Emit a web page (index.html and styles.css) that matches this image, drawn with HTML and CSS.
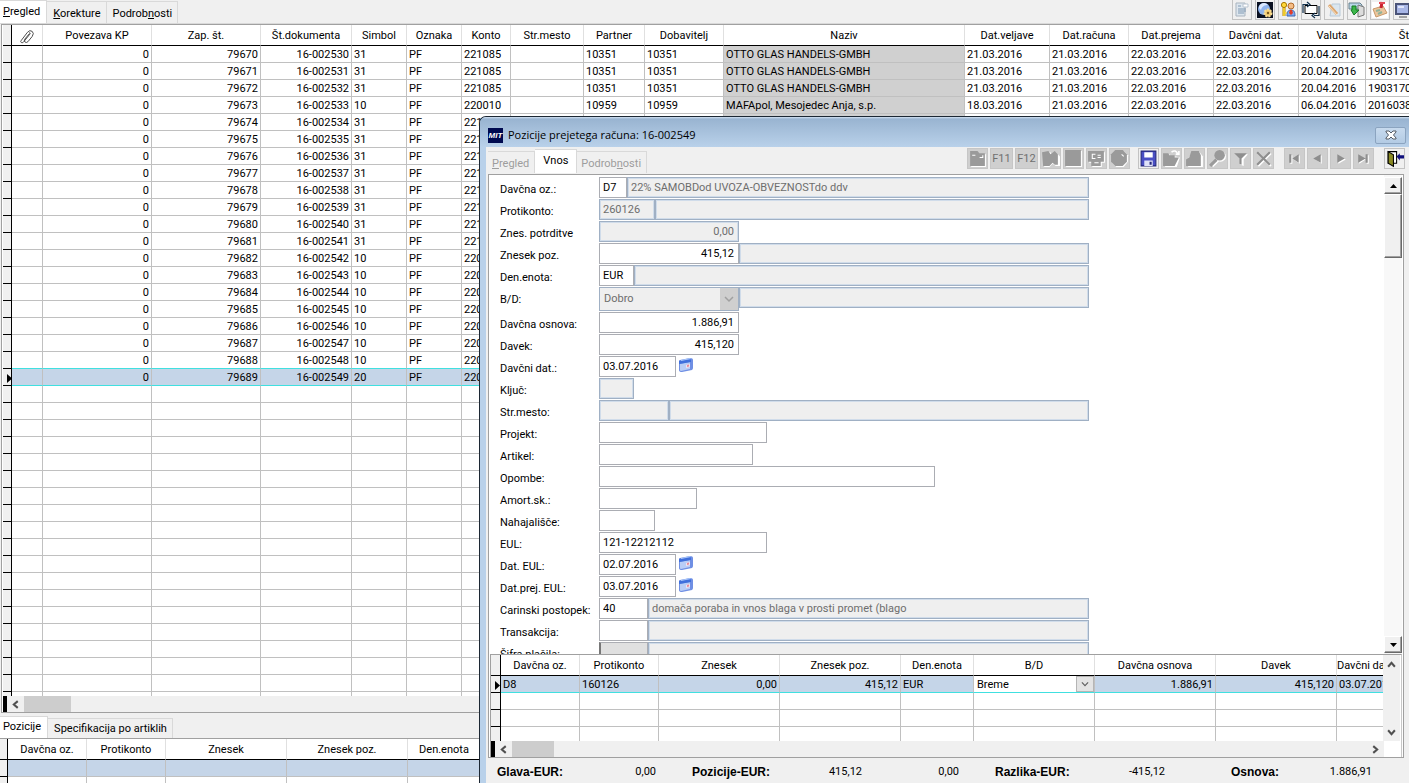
FILE: index.html
```html
<!DOCTYPE html>
<html lang="sl">
<head>
<meta charset="utf-8">
<title>Pozicije prejetega računa</title>
<link rel="stylesheet" href="styles.css">
</head>
<body>
<main class="app">
  <header class="strip">
    <nav class="tabs">
      <button class="tab active"><u>P</u>regled</button>
      <button class="tab"><u>K</u>orekture</button>
      <button class="tab">Podrob<u>n</u>osti</button>
    </nav>
    <div class="tools">
      <button class="tool" aria-label="Obrazec"><svg viewBox="0 0 18 18"><path fill="#dde6ee" stroke="#a9b4bf" d="M3 2h9v13H3z"/><path stroke="#7f98b2" d="M5 5h3M5 8h8M5 10h8M5 12h6"/><path fill="#fff" stroke="#b9c4cf" d="M10 3h5v3h-5z"/></svg></button>
      <button class="tool" aria-label="Nastavitve"><svg viewBox="0 0 18 18"><path fill="#0a1020" d="M1 1h16v16H1z"/><circle cx="8" cy="8" r="6" fill="#8fb4ee"/><path fill="#dbe9ff" d="M3 7a5 5 0 0 1 9-3C9 4 6 5 5 9z"/><circle cx="12" cy="12" r="3.5" fill="#f3cd72" stroke="#f8dc94" stroke-width="2" stroke-dasharray="2 1"/><circle cx="12" cy="12" r="1.2" fill="#7a5a20"/></svg></button>
      <button class="tool" aria-label="Uporabniki"><svg viewBox="0 0 18 18"><circle cx="5" cy="4" r="2.6" fill="#ffd83a" stroke="#a87700"/><path stroke="#b88400" stroke-width="3" d="M5 7v8"/><path stroke="#ffe03a" stroke-width="1.5" d="M5 7v8M6 12h2"/><circle cx="12" cy="5" r="3" fill="#f5bd86" stroke="#b36a2a"/><path fill="#7eaaf0" stroke="#3d62b0" d="M8 15c0-4 1-6 4-6s4 2 4 6z"/><path fill="#e33a28" d="M11 9h2l1 3-2 2-2-2z"/></svg></button>
      <button class="tool" aria-label="Osveži"><svg viewBox="0 0 18 18"><path fill="#fff" stroke="#000" d="M3 4.500h12v8H3z"/><path fill="none" stroke="#12304c" stroke-width="1.200" d="M1 12V3.500h5M5 1l3 2.500L5 6M17 5v9.500h-5M13 12l-3 2.500 3 2.500"/></svg></button>
      <button class="tool" aria-label="Priponka"><svg viewBox="0 0 18 18"><path fill="#dbe6ef" stroke="#b8c9d8" d="M7 3h8v12H5z"/><path stroke="#dda66e" stroke-width="3" d="M4 4l8 9"/><path stroke="#fae2c4" d="M4 5l8 9"/></svg></button>
      <button class="tool" aria-label="Prenos"><svg viewBox="0 0 18 18"><path fill="#b9d6e8" stroke="#67808e" d="M1 2h11l2 2v4H1z"/><path fill="#dcdcdc" stroke="#7a7a7a" d="M10 4l6 2v8l-6 2z"/><path fill="#3cb64a" stroke="#157a25" d="M4 5h4v4h3l-5 5-3-5h1z"/></svg></button>
      <button class="tool" aria-label="Zaznamek"><svg viewBox="0 0 18 18"><path fill="#fff" d="M1 1h16v16H1z"/><path fill="#ecc59c" stroke="#c89868" d="M2 8l10-3 4 7-11 4z"/><path stroke="#8fb29a" stroke-width="2" d="M5 10l4-1M7 13l4-2"/><path stroke="#c9212e" stroke-width="3" d="M11 1l-1 6"/><path stroke="#e24b57" stroke-width="2" d="M8 2h6"/></svg></button>
      <button class="tool" aria-label="Zaslon"><svg viewBox="0 0 18 18"><path fill="#a8b6e6" stroke="#4a5378" stroke-width="2" d="M2 3h13v10H2z"/><path fill="#dfe5fb" d="M4 5h6v2H4z"/><path stroke="#555" d="M5 16h8"/></svg></button>
    </div>
  </header>

  <section class="grid-box main-grid">
    <div class="grid-view">
      <table class="grid" id="invoices">
        <colgroup>
          <col class="c10"><col class="c31"><col class="c109"><col class="c109"><col class="c91"><col class="c55"><col class="c55"><col class="c49"><col class="c73"><col class="c61"><col class="c79"><col class="c241"><col class="c85"><col class="c79"><col class="c85"><col class="c85"><col class="c67"><col>
        </colgroup>
        <thead><tr>
          <th></th>
          <th><svg class="clip" viewBox="0 0 16 16"><path fill="none" stroke="#444" d="M2 12L8.500 3.500Q11 .5 13.500 2.500Q16 4.500 13.500 8L9 13.500Q7.500 15 6 14T5.500 11L10.500 5M2 12Q.5 13.500 2 14.500T5 13L11 5.500Q12 4 10.500 3.500"/></svg></th>
          <th>Povezava KP</th><th>Zap. št.</th><th>Št.dokumenta</th><th>Simbol</th><th>Oznaka</th><th>Konto</th><th>Str.mesto</th><th>Partner</th><th>Dobavitelj</th><th>Naziv</th><th>Dat.veljave</th><th>Dat.računa</th><th>Dat.prejema</th><th>Davčni dat.</th><th>Valuta</th><th class="end">Št</th>
        </tr></thead>
        <tbody></tbody>
      </table>
    </div>
    <div class="hscroll"><i class="split"></i><button class="arrow" aria-label="Levo"><svg viewBox="0 0 8 8"><path fill="none" stroke="#505050" stroke-width="1.8" d="M6 1L2.500 4 6 7"/></svg></button><i class="thumb wide"></i></div>
  </section>

  <section class="lower">
    <nav class="tabs">
      <button class="tab active">Pozicije</button>
      <button class="tab">Specifikacija po artiklih</button>
    </nav>
    <div class="lower-view">
      <table class="grid" id="positions">
        <colgroup><col class="c8"><col class="c79"><col class="c79"><col class="c121"><col class="c121"><col class="c73"><col></colgroup>
        <thead><tr><th></th><th>Davčna oz.</th><th>Protikonto</th><th>Znesek</th><th>Znesek poz.</th><th>Den.enota</th><th></th></tr></thead>
        <tbody>
          <tr class="soft"><td></td><td></td><td></td><td></td><td></td><td></td><td></td></tr>
          <tr><td></td><td></td><td></td><td></td><td></td><td></td><td></td></tr>
        </tbody>
      </table>
    </div>
  </section>
</main>

<section class="dialog" role="dialog" aria-labelledby="dlg-title">
  <header class="titlebar">
    <span class="logo">MIT</span>
    <h1 id="dlg-title">Pozicije prejetega računa: 16-002549</h1>
    <button class="close" aria-label="Zapri"><svg viewBox="0 0 12 10"><path fill="#fff" stroke="#555c66" d="M1 1h3l2 2 2-2h3v1L8.500 5 11 8v1H8L6 7 4 9H1V8l2.500-3L1 2z"/></svg></button>
  </header>
  <div class="client">
    <div class="dlg-strip">
      <nav class="tabs">
        <button class="tab" disabled><u>P</u>regled</button>
        <button class="tab active">Vnos</button>
        <button class="tab" disabled>Podrob<u>n</u>osti</button>
      </nav>
      <div class="dlg-tools">
        <div class="group">
          <button class="tool off" aria-label="Nov"><svg viewBox="0 0 18 18"><path fill="#fff" d="M3 3h7l2 2h5v12H3z"/><path fill="#9a9a9a" d="M2 2h7l2 2h5v12H2z"/><path fill="none" stroke="#fff" d="M4 6h3M11 8h3V6"/></svg></button>
          <button class="tool off fkey">F11</button>
          <button class="tool off fkey">F12</button>
          <button class="tool off" aria-label="Kopiraj"><svg viewBox="0 0 18 18"><path fill="#fff" d="M3 4l6-1 2 3 3-3 4 4v9h-4l-3-2-3 3H3z"/><path fill="#9a9a9a" d="M1 3l6-1 2 3 4-3 3 3v10h-3l-2-2-3 3H2z"/></svg></button>
          <button class="tool off" aria-label="Blok"><svg viewBox="0 0 18 18"><path fill="#fff" d="M2 2h15v15H2z"/><path fill="#9a9a9a" d="M1 1h15v15H1z"/></svg></button>
          <button class="tool off" aria-label="Izračun"><svg viewBox="0 0 18 18"><path fill="#fff" d="M2 3h15v10h-3v4H5v-4H2z"/><path fill="#9a9a9a" d="M1 2h15v10h-3v4H4v-4H1z"/><path fill="none" stroke="#fff" d="M8 5H5v4h3M10 6h3M10 8h3M7 13h4"/></svg></button>
          <button class="tool off" aria-label="Stanje"><svg viewBox="0 0 18 18"><path fill="#fff" d="M6 2h7l4 4v6l-4 5H6l-4-4V6z"/><path fill="#9a9a9a" d="M5 1h7l4 4v7l-4 4H5l-4-4V5z"/><path stroke="#fff" d="M11 5l2 2"/></svg></button>
        </div>
        <div class="group">
          <button class="tool" aria-label="Shrani"><svg viewBox="0 0 18 18"><path fill="#4a4fc4" stroke="#25287a" d="M2 2h14v14H2z"/><path fill="#fff" d="M5 3h8v5H5z"/><path fill="#dfe2f8" d="M5 11h8v5H5z"/><path fill="#25287a" d="M10 12h2v3h-2z"/></svg></button>
          <button class="tool off" aria-label="Odpri"><svg viewBox="0 0 18 18"><path fill="#fff" d="M2 5h5l1 2h5l4 1-3 9H3z"/><path fill="#9a9a9a" d="M1 4h5l1 2h5v2h4l-4 8H1z"/><path fill="none" stroke="#fff" stroke-width="1.500" d="M9 3q4-3 6 2M13 5h3V2"/></svg></button>
          <button class="tool off" aria-label="Natisni"><svg viewBox="0 0 18 18"><path fill="#fff" d="M7 3h7l3 4v10H3V9z"/><path fill="#9a9a9a" d="M6 2h7l2 4v10H1v-6l3-2z"/></svg></button>
          <button class="tool off" aria-label="Išči"><svg viewBox="0 0 18 18"><path stroke="#fff" stroke-width="3" d="M4 16l6-6"/><circle cx="12" cy="7" r="5" fill="#fff"/><path stroke="#9a9a9a" stroke-width="3" d="M2 16l6-6"/><circle cx="11" cy="6" r="5" fill="#9a9a9a"/></svg></button>
          <button class="tool off" aria-label="Filter"><svg viewBox="0 0 18 18"><path fill="#fff" d="M4 5h12l-4 5v6l-3-1v-5z"/><path fill="#8e8e8e" d="M3 4h12l-5 5v6l-2-1V9z"/></svg></button>
          <button class="tool off" aria-label="Briši"><svg viewBox="0 0 18 18"><path stroke="#fff" stroke-width="2" d="M4 4l12 12M16 4L4 16"/><path stroke="#8e8e8e" stroke-width="2" d="M3 3l12 12M15 3L3 15"/></svg></button>
        </div>
        <div class="group nav">
          <button class="tool off" aria-label="Prvi"><svg viewBox="0 0 18 18"><path fill="#fff" d="M5 6h2v8H5zM14 6v8l-6-4z"/><path fill="#8e8e8e" d="M4 5h2v8H4zM13 5v8L7 9z"/></svg></button>
          <button class="tool off" aria-label="Prejšnji"><svg viewBox="0 0 18 18"><path fill="#fff" d="M13 6v8l-6-4z"/><path fill="#8e8e8e" d="M12 5v8L5 9z"/></svg></button>
          <button class="tool off" aria-label="Naslednji"><svg viewBox="0 0 18 18"><path fill="#fff" d="M7 6v8l7-4z"/><path fill="#8e8e8e" d="M6 5v8l7-4z"/></svg></button>
          <button class="tool off" aria-label="Zadnji"><svg viewBox="0 0 18 18"><path fill="#fff" d="M5 6v8l6-4zM12 6h2v8h-2z"/><path fill="#8e8e8e" d="M4 5v8l7-4zM11 5h2v8h-2z"/></svg></button>
        </div>
        <div class="group nav">
          <button class="tool" aria-label="Izhod"><svg viewBox="0 0 18 18"><path fill="#fff" stroke="#000" d="M3 2.500h8v11H3z"/><path fill="#8a8a22" stroke="#000" d="M3 2.500l5 3v11l-5-3z"/><path fill="#10107c" d="M11 7l3-3v2h4v3h-4v2z"/></svg></button>
        </div>
      </div>
    </div>

    <div class="panel">
      <div class="form-area">
        <form class="form">
          <div class="row"><label for="f1">Davčna oz.:</label><div class="fields"><input id="f1" class="f28" value="D7"><input class="desc" readonly aria-label="Davčna oznaka opis" value="22% SAMOBDod UVOZA-OBVEZNOSTdo ddv"></div></div>
          <div class="row"><label for="f2">Protikonto:</label><div class="fields"><input id="f2" class="f56" readonly value="260126"><input class="desc" readonly aria-label="Protikonto opis"></div></div>
          <div class="row"><label for="f3">Znes. potrditve</label><div class="fields"><input id="f3" class="f140 num" readonly value="0,00"></div></div>
          <div class="row"><label for="f4">Znesek poz.</label><div class="fields"><input id="f4" class="f140 num" value="415,12"><input class="desc" readonly aria-label="Znesek opis"></div></div>
          <div class="row"><label for="f5">Den.enota:</label><div class="fields"><input id="f5" class="f35" value="EUR"><input class="desc" readonly aria-label="Denarna enota opis"></div></div>
          <div class="row tall"><label for="f6">B/D:</label><div class="fields"><span class="combo f140"><select id="f6" disabled><option>Dobro</option></select><svg viewBox="0 0 18 18"><path fill="none" stroke="#a0a0a0" stroke-width="1.500" d="M5 7l4 4 4-4"/></svg></span><input class="desc" readonly aria-label="B/D opis"></div></div>
          <div class="row"><label for="f7">Davčna osnova:</label><div class="fields"><input id="f7" class="f140 num" value="1.886,91"></div></div>
          <div class="row"><label for="f8">Davek:</label><div class="fields"><input id="f8" class="f140 num" value="415,120"></div></div>
          <div class="row"><label for="f9">Davčni dat.:</label><div class="fields"><input id="f9" class="f77" value="03.07.2016"><button type="button" class="cal" aria-label="Koledar"></button></div></div>
          <div class="row"><label for="f10">Ključ:</label><div class="fields"><input id="f10" class="f35" readonly></div></div>
          <div class="row"><label for="f11">Str.mesto:</label><div class="fields"><input id="f11" class="f70" readonly><input class="desc" readonly aria-label="Stroškovno mesto opis"></div></div>
          <div class="row"><label for="f12">Projekt:</label><div class="fields"><input id="f12" class="f168"></div></div>
          <div class="row"><label for="f13">Artikel:</label><div class="fields"><input id="f13" class="f154"></div></div>
          <div class="row"><label for="f14">Opombe:</label><div class="fields"><input id="f14" class="f336"></div></div>
          <div class="row"><label for="f15">Amort.sk.:</label><div class="fields"><input id="f15" class="f98"></div></div>
          <div class="row"><label for="f16">Nahajališče:</label><div class="fields"><input id="f16" class="f56"></div></div>
          <div class="row"><label for="f17">EUL:</label><div class="fields"><input id="f17" class="f168" value="121-12212112"></div></div>
          <div class="row"><label for="f18">Dat. EUL:</label><div class="fields"><input id="f18" class="f77" value="02.07.2016"><button type="button" class="cal" aria-label="Koledar"></button></div></div>
          <div class="row"><label for="f19">Dat.prej. EUL:</label><div class="fields"><input id="f19" class="f77" value="03.07.2016"><button type="button" class="cal" aria-label="Koledar"></button></div></div>
          <div class="row"><label for="f20">Carinski postopek:</label><div class="fields"><input id="f20" class="f49" value="40"><input class="desc" readonly aria-label="Carinski postopek opis" value="domača poraba in vnos blaga v prosti promet (blago"></div></div>
          <div class="row"><label for="f21">Transakcija:</label><div class="fields"><input id="f21" class="f49"><input class="desc" readonly aria-label="Transakcija opis"></div></div>
          <div class="row"><label for="f22">Šifra plačila:</label><div class="fields"><input id="f22" class="f49 current"><input class="desc" readonly aria-label="Plačilo opis"></div></div>
        </form>
        <div class="vscroll">
          <button class="bevel" aria-label="Gor"><svg viewBox="0 0 9 5"><path d="M4.500 0L9 5H0z"/></svg></button>
          <i class="bevel grip"></i>
          <i class="fill"></i>
          <button class="bevel" aria-label="Dol"><svg viewBox="0 0 9 5"><path d="M4.500 5L9 0H0z"/></svg></button>
        </div>
      </div>

      <div class="grid-box dlg-grid">
        <div class="dlg-body">
          <div class="dlg-view">
            <table class="grid" id="entries">
              <colgroup><col class="c10"><col class="c79"><col class="c79"><col class="c121"><col class="c121"><col class="c73"><col class="c121"><col class="c121"><col class="c121"><col></colgroup>
              <thead><tr><th></th><th>Davčna oz.</th><th>Protikonto</th><th>Znesek</th><th>Znesek poz.</th><th>Den.enota</th><th>B/D</th><th>Davčna osnova</th><th>Davek</th><th class="start">Davčni dat.</th></tr></thead>
              <tbody>
                <tr class="sel"><td><i class="mark"></i></td><td>D8</td><td>160126</td><td class="n">0,00</td><td class="n">415,12</td><td>EUR</td><td class="cell-combo"><span class="combo"><select aria-label="B/D"><option>Breme</option></select><svg viewBox="0 0 18 18"><path fill="none" stroke="#606060" stroke-width="1.500" d="M5 7l4 4 4-4"/></svg></span></td><td class="n">1.886,91</td><td class="n">415,120</td><td>03.07.2016</td></tr>
              </tbody>
            </table>
          </div>
          <div class="vscroll flat">
            <button class="arrow" aria-label="Gor"><svg viewBox="0 0 8 8"><path fill="none" stroke="#505050" stroke-width="1.800" d="M1 6l3-3.500L7 6"/></svg></button>
            <i class="fill"></i>
            <button class="arrow" aria-label="Dol"><svg viewBox="0 0 8 8"><path fill="none" stroke="#505050" stroke-width="1.800" d="M1 2l3 3.500L7 2"/></svg></button>
          </div>
        </div>
        <div class="hscroll inset"><i class="split"></i><button class="arrow" aria-label="Levo"><svg viewBox="0 0 8 8"><path fill="none" stroke="#505050" stroke-width="1.800" d="M6 1L2.500 4 6 7"/></svg></button><i class="thumb"></i><i class="fill"></i><button class="arrow" aria-label="Desno"><svg viewBox="0 0 8 8"><path fill="none" stroke="#505050" stroke-width="1.800" d="M2 1l3.500 3L2 7"/></svg></button></div>
      </div>
    </div>

    <footer class="totals">
      <div class="sum s159"><b>Glava-EUR:</b><span>0,00</span></div>
      <div class="sum s171"><b>Pozicije-EUR:</b><span>415,12</span></div>
      <div class="sum s61"><span>0,00</span></div>
      <div class="sum s171"><b>Razlika-EUR:</b><span>-415,12</span></div>
      <div class="sum last"><b>Osnova:</b><span>1.886,91</span></div>
    </footer>
  </div>
</section>
<script src="app.js"></script>
</body>
</html>
```
FILE: styles.css
```css
* { box-sizing: border-box; }
html, body { height: 100%; margin: 0; overflow: hidden; }
body, button, input, select { font: 11px/16px Roboto, "Liberation Sans", sans-serif; color: #000; }
button, input, select { margin: 0; padding: 0; border: 0; border-radius: 0; background: none; outline: 0; }
i { display: block; }
.app { display: flex; flex-direction: column; height: 100vh; background: #f0f0f0; }

.strip { display: flex; justify-content: space-between; height: 24px; flex: none; border-bottom: 1px solid #d9d9d9; }
.tabs { display: flex; align-items: flex-end; }
.tab { height: 22px; padding: 2px 5px 0 6px; border: 1px solid #d9d9d9; border-bottom: 0; border-left: 0; background: #f0f0f0; white-space: nowrap; }
.tab.active { align-self: stretch; height: auto; padding: 0 6px 1px 3px; background: #fff; }
.tab:disabled { color: #9d9d9d; }
.tools { display: flex; gap: 3px; margin-right: -4px; }
.tool { width: 20px; height: 20px; padding: 0; border: 1px solid #c3c3c3; background: #f0f0f0; flex: none; }
.tool svg { display: block; width: 18px; height: 18px; }
.tools .tool { border-top: 0; }

.grid-box { border: 1px solid #a0a0a0; background: #fff; display: flex; flex-direction: column; }
.main-grid { flex: 1; min-height: 0; margin-left: 1px; border-right: 0; padding-left: 1px; }
.grid-view { flex: 1; min-height: 0; overflow: hidden; }
.grid { width: 100%; table-layout: fixed; border-collapse: separate; border-spacing: 0; }
.grid th, .grid td { height: 17px; padding: 2px 2px 0; border-right: 1px solid #c0c0c0; border-bottom: 1px solid #c0c0c0; overflow: hidden; white-space: nowrap; line-height: 14px; text-align: left; font-weight: 400; }
.grid th { height: 21px; text-align: center; border-right-color: #e0e0e0; border-bottom-color: #000; }
.grid th.end { text-align: right; padding-right: 0; }
.grid th.start { text-align: left; padding-left: 0; padding-right: 0; }
.grid td.n { text-align: right; }
.grid th:first-child, .grid td:first-child { padding: 0; background: #f0f0f0; border-right-color: #000; border-bottom-color: #000; }
.grid th:last-child, .grid td:last-child { border-right: 0; }
.grid .name { background: #d0d0d0; }
.grid .sel td:not(:first-child), .grid .soft td:not(:first-child) { background: #c5d5e8; }
.grid .sel td:not(:first-child) { border-bottom: 1px solid #40e0e0; }
.grid .before-sel td:not(:first-child) { border-bottom: 1px solid #40e0e0; }
.mark { width: 5px; height: 9px; margin: 3px 0 0 4px; background: #000; clip-path: polygon(0 0, 100% 50%, 0 100%); }
.clip { display: block; width: 16px; height: 15px; margin: 0 auto; }
.c8 { width: 8px; } .c10 { width: 9px; } .c31 { width: 31px; } .c49 { width: 49px; } .c55 { width: 55px; }
.c61 { width: 61px; } .c67 { width: 67px; } .c73 { width: 73px; } .c79 { width: 79px; } .c85 { width: 85px; }
.c91 { width: 91px; } .c109 { width: 109px; } .c121 { width: 121px; } .c241 { width: 241px; }
#entries .c10 { width: 10px; }

.hscroll { display: flex; flex: none; height: 16px; background: #f0f0f0; }
.split { width: 4px; background: #000; }
.arrow { display: grid; place-items: center; width: 17px; height: 16px; flex: none; }
.arrow svg { width: 9px; height: 9px; display: block; }
.thumb { width: 42px; background: #cdcdcd; }
.thumb.wide { width: 47px; }
.fill { flex: 1; }
.lower { flex: none; padding-top: 3px; }
.lower .tabs { height: 22px; }
.lower .tab { height: 20px; padding-top: 0; }
.lower .tab.active { height: auto; }
.lower-view { height: 45px; overflow: hidden; border-top: 1px solid #a0a0a0; background: #fff; }

.dialog { position: absolute; top: 116px; left: 479px; right: 0; bottom: 0; display: flex; flex-direction: column; border: 1px solid #1c2733; border-right: 0; border-bottom: 0; border-radius: 7px 0 0 0; background: #b9d1ea; overflow: hidden; }
.titlebar { display: flex; align-items: center; gap: 5px; height: 30px; flex: none; padding: 6px 3px 0 8px; background: linear-gradient(#d3e2f2 0, #99b4d1 2px, #b9d1ea); }
.logo { width: 15px; height: 15px; background: #000a50; color: #fff; font: italic 700 8px/15px "Liberation Sans", sans-serif; text-align: center; overflow: hidden; }
.titlebar h1 { flex: 1; margin: 0; font: 400 11px/16px "Open Sans", sans-serif; }
.close { display: grid; place-items: center; width: 31px; height: 17px; border: 1px solid #8ba4c0; border-radius: 2px; background: linear-gradient(#c7daee, #b3cbe4); }
.close svg { width: 12px; height: 10px; }
.client { flex: 1; min-height: 0; display: flex; flex-direction: column; margin-left: 6px; background: #f0f0f0; }
.dlg-strip { display: flex; justify-content: space-between; height: 26px; flex: none; padding: 1px 4px 0 2px; }
.dlg-strip .tabs { padding-top: 1px; }
.dlg-strip .tab { padding-left: 4px; padding-right: 5px; }
.dlg-strip .tab.active { padding: 0 8px 1px; }
.dlg-tools, .group { display: flex; gap: 2px; }
.group + .group { margin-left: 6px; }
.group + .group.nav { margin-left: 8px; }
.dlg-tools .tool { width: 21px; height: 21px; }
.dlg-tools .tool svg { width: 19px; height: 19px; }
.dlg-tools .off { background: #cfcfcf; border-color: #c6c6c6; color: #6f6f6f; }
.dlg-tools .fkey { width: 23px; line-height: 19px; }

.panel { flex: 1; min-height: 0; display: flex; flex-direction: column; margin: 1px 5px 0 2px; border: 1px solid #a0a0a0; background: #fff; }
.form-area { flex: 1; min-height: 0; display: flex; justify-content: space-between; overflow: hidden; }
.form { flex: 1; max-width: 600px; padding: 2px 0 0 11px; overflow: hidden; }
.row { display: flex; align-items: flex-start; height: 22px; }
.row.tall { height: 25px; }
.row label { width: 99px; padding-top: 5px; line-height: 16px; white-space: nowrap; }
.fields { flex: 1; display: flex; align-items: flex-start; }
.fields input { height: 21px; padding: 0 4px 0 3px; border: 1px solid #abadb3; background: #fff; flex: none; }
.fields input:read-only { border-color: #a0b0c4; background: #efefef; color: #6d6d6d; box-shadow: inset 0 0 0 1px #d0dcea; }
.fields .desc { flex: 1; min-width: 0; }
.fields .num { text-align: right; }
.fields .current { background: #e0e0e0; border-left: 2px solid #777; }
.f28 { width: 28px; } .f35 { width: 35px; } .f49 { width: 49px; } .f56 { width: 56px; } .f70 { width: 70px; } .f77 { width: 77px; }
.f98 { width: 98px; } .f140 { width: 140px; } .f154 { width: 154px; } .f168 { width: 168px; } .f336 { width: 336px; }
.combo { display: grid; grid-template-columns: 1fr 18px; height: 24px; border: 1px solid #a0b0c4; background: #efefef; }
.combo select { grid-area: 1 / 1 / 2 / 3; appearance: none; width: 100%; padding: 0 20px 0 4px; opacity: 1; }
.combo select:disabled { color: #6d6d6d; }
.combo svg { grid-area: 1 / 2; width: 18px; height: 100%; background: #cfcfcf; pointer-events: none; }
.grid .cell-combo { padding: 0; }
.cell-combo .combo { height: 16px; border: 0; background: #fff; }
.cell-combo .combo select { padding: 1px 20px 0 3px; height: 16px; }
.cell-combo .combo svg { background: #e4e4e4; border: 1px solid #b5b5b5; }
.cal { width: 16px; height: 16px; margin: 1px 0 0 2px; }
.cal svg { display: block; width: 16px; height: 16px; }

.vscroll { display: flex; flex-direction: column; width: 18px; margin-right: 1px; padding: 2px 0 1px; background: #f8f8f8; flex: none; }
.bevel { display: grid; place-items: center; height: 17px; flex: none; background: #f0f0f0; border: 1px solid #fff; border-right-color: #696969; border-bottom-color: #696969; box-shadow: inset -1px -1px #a0a0a0; }
.bevel svg { width: 7px; height: 4px; }
.grip { height: 64px; }
.vscroll.flat { width: 17px; padding: 1px 0; background: #f0f0f0; }
.dlg-grid { flex: none; margin: 0 1px 0 1px; border-right-color: #c8c8c8; border-bottom: 0; }
.dlg-body { display: flex; height: 86px; }
.dlg-view { flex: 1; min-width: 0; overflow: hidden; }
.inset { margin-right: 17px; }
.totals { display: flex; gap: 36px; height: 25px; flex: none; padding: 6px 10px 0 11px; }
.totals b { font: 700 12px/16px "Liberation Sans", sans-serif; }
.sum { display: flex; justify-content: space-between; }
.s159 { width: 159px; } .s171 { width: 170px; }
.s61 { width: 61px; justify-content: flex-end; }
.sum.last { width: 141px; margin-left: 30px; }
```
FILE: app.js
```js
const symbols = [31, 31, 31, 10, 31, 31, 31, 31, 31, 31, 31, 31, 10, 10, 10, 10, 10, 10, 10, 20];
const otto = ["221085", "", "10351", "10351", "OTTO GLAS HANDELS-GMBH", "21.03.2016", "21.03.2016", "22.03.2016", "22.03.2016", "20.04.2016", "1903170"];
const mafa = ["220010", "", "10959", "10959", "MAFApol, Mesojedec Anja, s.p.", "18.03.2016", "21.03.2016", "22.03.2016", "22.03.2016", "06.04.2016", "2016038"];

function addRow(body, cells, options = {}) {
  const tr = body.insertRow();
  if (options.rowClass) tr.className = options.rowClass;
  cells.forEach((text, i) => {
    const td = tr.insertCell();
    td.textContent = text;
    if (options.numeric && options.numeric.includes(i)) td.className = "n";
    if (i === options.shaded) td.className = "name";
  });
  if (options.rowClass === "sel") tr.cells[0].innerHTML = '<i class="mark"></i>';
}

const invoices = document.querySelector("#invoices tbody");
const last = symbols.length - 1;
symbols.forEach((symbol, i) => {
  let tail = [symbol === 31 ? "221" : "220", ...Array(10).fill("")];
  if (i < 3) tail = otto;
  if (i === 3) tail = mafa;
  const rowClass = i === last ? "sel" : i === last - 1 ? "before-sel" : "";
  addRow(invoices, ["", "", "0", 79670 + i, "16-00" + (2530 + i), symbol, "PF", ...tail],
    { numeric: [2, 3, 4], shaded: 11, rowClass });
});
for (let i = 0; i < 19; i++) addRow(invoices, Array(18).fill(""));

const entries = document.querySelector("#entries tbody");
for (let i = 0; i < 3; i++) addRow(entries, Array(10).fill(""));

const calendar = '<svg viewBox="0 0 16 16"><path fill="#6f8fe4" d="M1 4q0-1 1-1l10-2q3 0 3 2v8q0 1-1 2L4 15q-3 0-3-2z"/><path fill="#b9cdf6" d="M2 7l10-2v7l-9 2q-1 0-1-1z"/><path fill="#3f6fdc" d="M1 4l11-2q1 0 1 1v2L1 7z"/><path fill="#a9c6fa" d="M3 3l9-2 1 1-10 2z"/><path fill="#f2e2ee" d="M8 8l4-1v3l-4 1z"/><path fill="#e58a9a" d="M9 8l2-.5v2L9 10z"/></svg>';
document.querySelectorAll(".cal").forEach((button) => { button.innerHTML = calendar; });
```
